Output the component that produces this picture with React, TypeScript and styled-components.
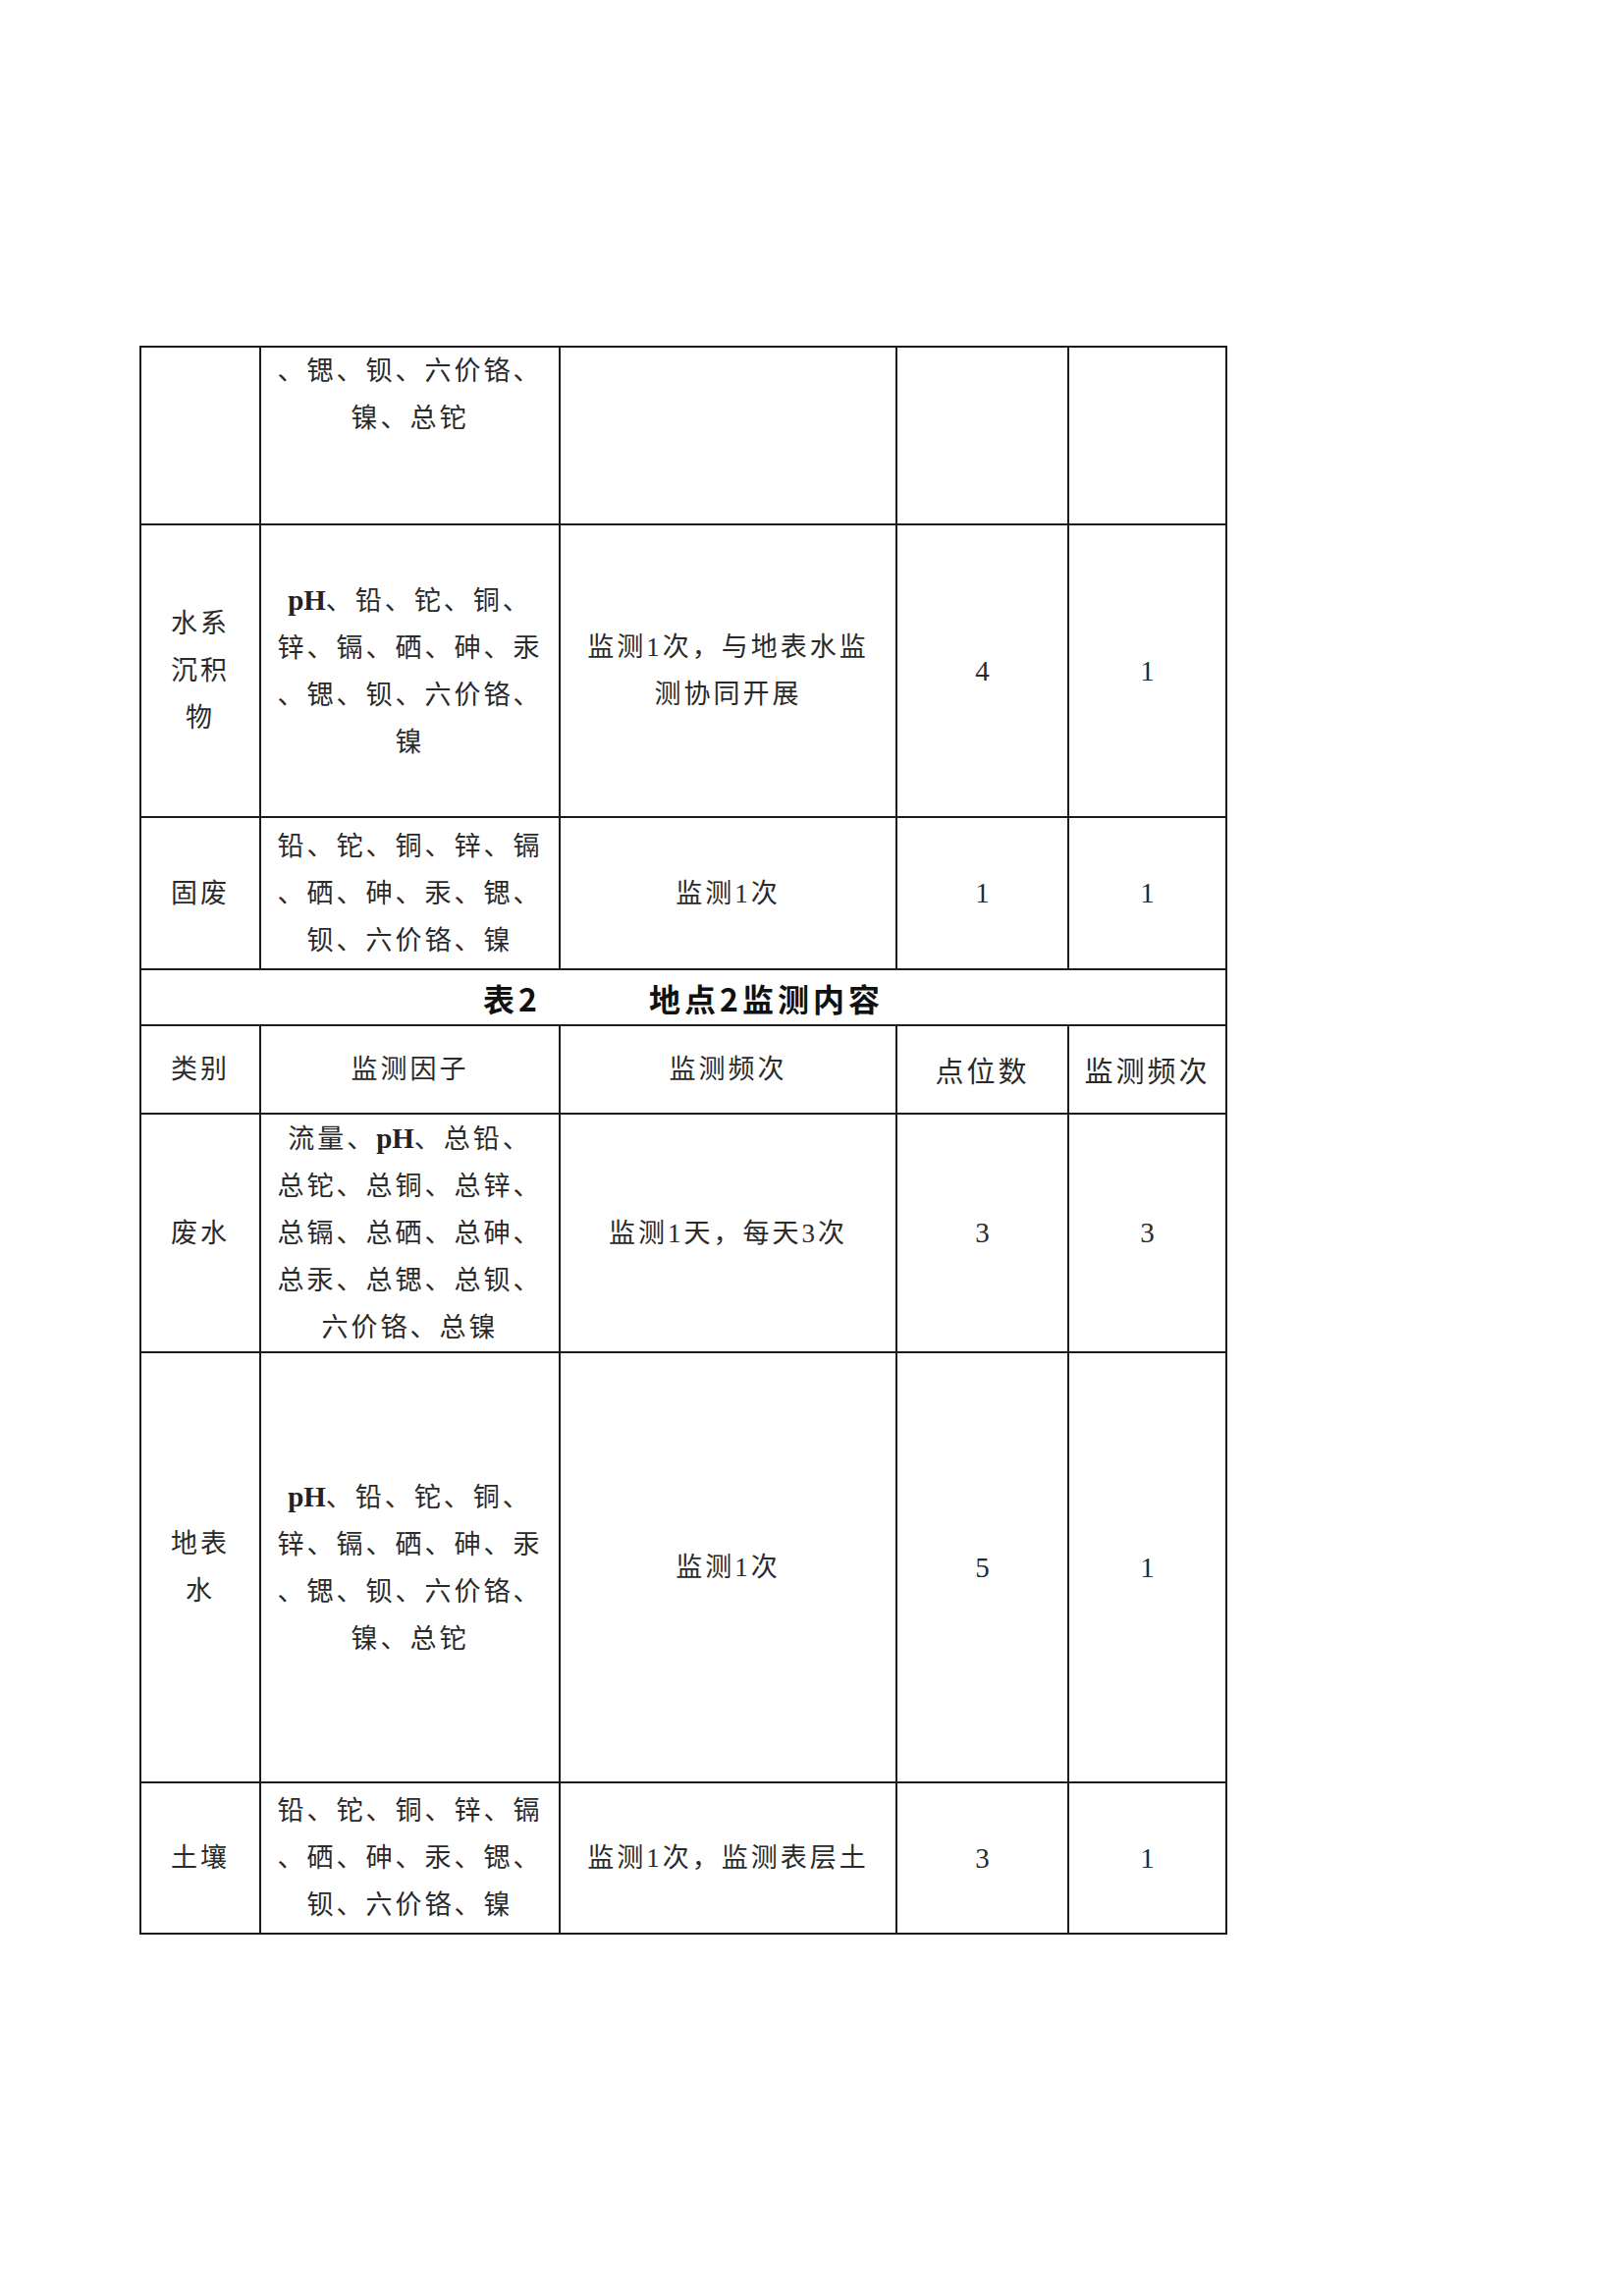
import React from "react";
import styled, { createGlobalStyle } from "styled-components";

const GlobalStyle = createGlobalStyle`
  html, body {
    margin: 0;
    padding: 0;
    background: #fff;
  }
`;

const Page = styled.div`
  box-sizing: border-box;
  width: 1654px;
  min-height: 2338px;
  padding: 352px 0 0 142px;
`;

const Table = styled.table`
  border-collapse: collapse;
  table-layout: fixed;
  width: 1106px;
  font-family: "Liberation Serif", "Noto Sans CJK SC", serif;
  color: #2a2a2a;
`;

const Row = styled.tr<{ $h: number }>`
  height: ${(p) => p.$h}px;
`;

const Cell = styled.td<{ $top?: boolean; $big?: boolean }>`
  border: 2px solid #1c1c1c;
  padding: 0;
  text-align: center;
  vertical-align: ${(p) => (p.$top ? "top" : "middle")};
  font-size: ${(p) => (p.$big ? 29 : 27)}px;
  line-height: 48px;
  letter-spacing: 3px;
  font-weight: 400;
  padding-top: ${(p) => (p.$big ? 6 : 0)}px;
`;

const TitleCell = styled.td`
  border: 2px solid #1c1c1c;
  padding: 0;
`;

const Title = styled.div`
  display: flex;
  justify-content: center;
  gap: 110px;
  font-family: "Noto Sans CJK SC", sans-serif;
  font-weight: 700;
  font-size: 32px;
  letter-spacing: 4px;
  color: #111;
  line-height: 42px;
`;

const Line = styled.span`
  display: block;
  white-space: nowrap;
`;

const Latin = styled.span`
  font-family: "Liberation Serif", serif;
  font-weight: 700;
  font-size: 29px;
  letter-spacing: 0;
  color: #222;
`;

const Num = styled.span`
  font-family: "Liberation Serif", serif;
  font-size: 29px;
  letter-spacing: 0;
  color: #2a2a2a;
`;

type DataRow = {
  h: number;
  top?: boolean;
  kind: string[];
  factors: string[];
  freq: string[];
  points: string;
  times: string;
};

const part1: DataRow[] = [
  { h: 181, top: true, kind: [], factors: ["、锶、钡、六价铬、", "镍、总铊"], freq: [], points: "", times: "" },
  {
    h: 298,
    kind: ["水系", "沉积", "物"],
    factors: ["pH、铅、铊、铜、", "锌、镉、硒、砷、汞", "、锶、钡、六价铬、", "镍"],
    freq: ["监测1次，与地表水监", "测协同开展"],
    points: "4",
    times: "1",
  },
  {
    h: 155,
    kind: ["固废"],
    factors: ["铅、铊、铜、锌、镉", "、硒、砷、汞、锶、", "钡、六价铬、镍"],
    freq: ["监测1次"],
    points: "1",
    times: "1",
  },
];

const part2: DataRow[] = [
  {
    h: 241,
    kind: ["废水"],
    factors: ["流量、pH、总铅、", "总铊、总铜、总锌、", "总镉、总硒、总砷、", "总汞、总锶、总钡、", "六价铬、总镍"],
    freq: ["监测1天，每天3次"],
    points: "3",
    times: "3",
  },
  {
    h: 438,
    kind: ["地表", "水"],
    factors: ["pH、铅、铊、铜、", "锌、镉、硒、砷、汞", "、锶、钡、六价铬、", "镍、总铊"],
    freq: ["监测1次"],
    points: "5",
    times: "1",
  },
  {
    h: 154,
    kind: ["土壤"],
    factors: ["铅、铊、铜、锌、镉", "、硒、砷、汞、锶、", "钡、六价铬、镍"],
    freq: ["监测1次，监测表层土"],
    points: "3",
    times: "1",
  },
];

function withLatin(text: string) {
  return text.split(/(pH)/).map((part, i) =>
    part === "pH" ? <Latin key={i}>pH</Latin> : <React.Fragment key={i}>{part}</React.Fragment>
  );
}

function Lines({ items }: { items: string[] }) {
  return (
    <>
      {items.map((t, i) => (
        <Line key={i}>{withLatin(t)}</Line>
      ))}
    </>
  );
}

function DataRows({ rows }: { rows: DataRow[] }) {
  return (
    <>
      {rows.map((r, i) => (
        <Row $h={r.h} key={i}>
          <Cell><Lines items={r.kind} /></Cell>
          <Cell $top={r.top}><Lines items={r.factors} /></Cell>
          <Cell><Lines items={r.freq} /></Cell>
          <Cell><Num>{r.points}</Num></Cell>
          <Cell><Num>{r.times}</Num></Cell>
        </Row>
      ))}
    </>
  );
}

export default function App() {
  return (
    <Page>
      <GlobalStyle />
      <Table>
        <colgroup>
          <col style={{ width: 122 }} />
          <col style={{ width: 305 }} />
          <col style={{ width: 343 }} />
          <col style={{ width: 175 }} />
          <col style={{ width: 161 }} />
        </colgroup>
        <tbody>
          <DataRows rows={part1} />
          <Row $h={57}>
            <TitleCell colSpan={5}>
              <Title>
                <span>表2</span>
                <span>地点2监测内容</span>
              </Title>
            </TitleCell>
          </Row>
          <Row $h={90}>
            <Cell>类别</Cell>
            <Cell>监测因子</Cell>
            <Cell>监测频次</Cell>
            <Cell $big>点位数</Cell>
            <Cell $big>监测频次</Cell>
          </Row>
          <DataRows rows={part2} />
        </tbody>
      </Table>
    </Page>
  );
}
